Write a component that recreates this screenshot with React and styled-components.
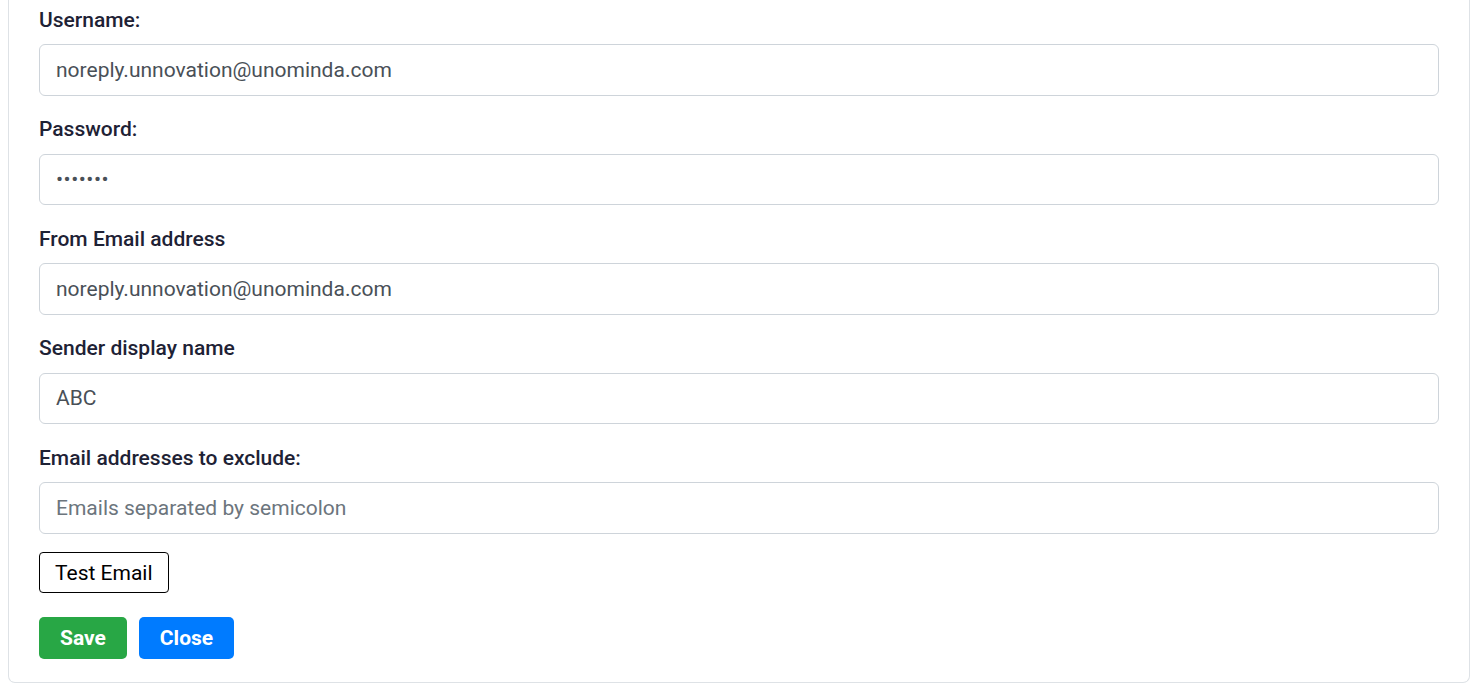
import React from 'react';
import styled, { createGlobalStyle } from 'styled-components';

const GlobalStyle = createGlobalStyle`
  * { box-sizing: border-box; }
  body {
    margin: 0;
    padding: 0 5px 5px 8px;
    background: #fff;
    font-family: Roboto, "Liberation Sans", Arial, sans-serif;
  }
`;

// card, its top edge is scrolled off the page
const Card = styled.div`
  border: 1px solid #dee2e6;
  border-top: none;
  border-radius: 0 0 7px 7px;
  background: #fff;
  padding: 6.5px 30px 23px 30px;
`;

const Group = styled.div`
  margin-bottom: 20.5px;
`;

const Label = styled.label`
  display: block;
  font-size: 21px;
  font-weight: 500;
  line-height: 27px;
  color: #1e2235;
  margin-bottom: 10.5px;
`;

const Input = styled.input`
  display: block;
  width: 100%;
  height: 51.5px;
  padding: 0 16px;
  font-family: inherit;
  font-size: 21px;
  color: #495057;
  border: 1px solid #ced4da;
  border-radius: 6px;
  outline: none;
  background: #fff;
  letter-spacing: ${p => (p.type === 'password' ? '0.5px' : 'normal')};

  &::placeholder {
    color: #6c757d;
  }
`;

const TestButton = styled.button`
  display: block;
  height: 41px;
  padding: 0 15px;
  font-family: inherit;
  font-size: 21px;
  color: #000;
  background: #fff;
  border: 1px solid #000;
  border-radius: 4px;
  margin-top: -2px;
  cursor: pointer;
`;

const Actions = styled.div`
  display: flex;
  gap: 12px;
  margin-top: 24px;
`;

const ActionButton = styled.button`
  height: 42px;
  padding: 0 21px;
  font-family: inherit;
  font-size: 21px;
  font-weight: 700;
  color: #fff;
  background: ${p => p.$bg};
  border: none;
  border-radius: 5px;
  cursor: pointer;
`;

const fields = [
  { label: 'Username:', value: 'noreply.unnovation@unominda.com' },
  { label: 'Password:', value: 'abc1234', type: 'password' },
  { label: 'From Email address', value: 'noreply.unnovation@unominda.com' },
  { label: 'Sender display name', value: 'ABC' },
  { label: 'Email addresses to exclude:', value: '', placeholder: 'Emails separated by semicolon' },
];

export default function App() {
  return (
    <>
      <GlobalStyle />
      <Card>
        {fields.map(f => (
          <Group key={f.label}>
            <Label>{f.label}</Label>
            <Input
              type={f.type || 'text'}
              defaultValue={f.value}
              placeholder={f.placeholder}
            />
          </Group>
        ))}
        <TestButton>Test Email</TestButton>
        <Actions>
          <ActionButton $bg="#28a745">Save</ActionButton>
          <ActionButton $bg="#007bff">Close</ActionButton>
        </Actions>
      </Card>
    </>
  );
}
